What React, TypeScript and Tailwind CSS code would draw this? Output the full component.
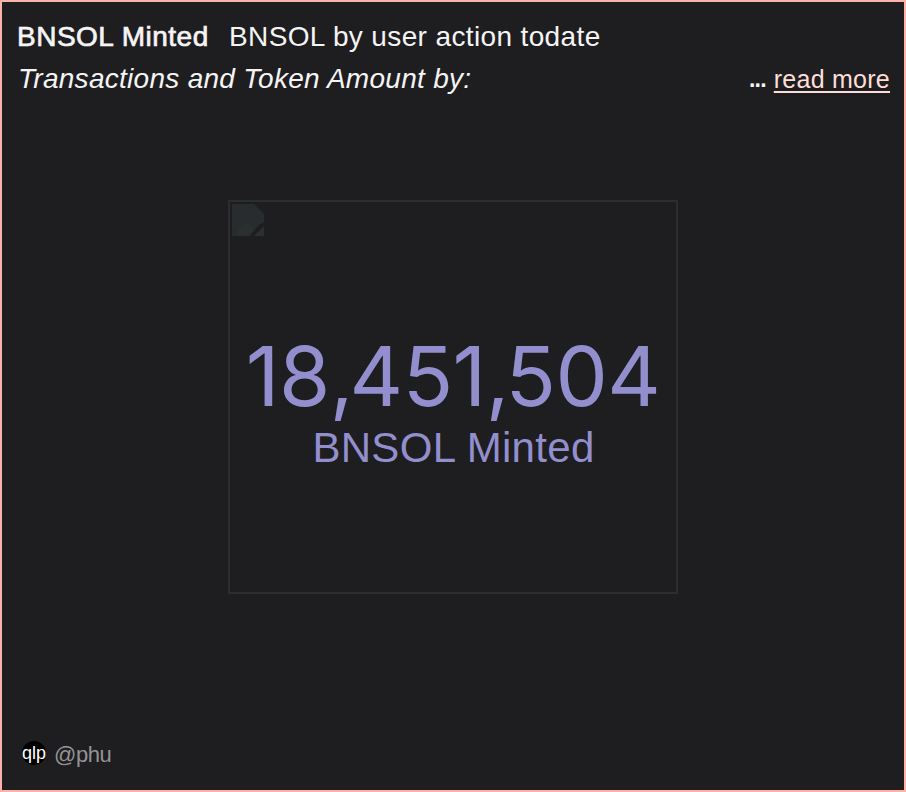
function BrokenImage() {
  return (
    <svg className="m-0.5 block h-8 w-8" viewBox="0 0 32 32" aria-hidden="true">
      <path d="M0 0H22L32 10V18L26 22L18 32H0Z" fill="#292c2e" />
      <path d="M6 26L14 18L22 24L16 32H6Z" fill="#29302d" />
      <path d="M32 22V32H22Z" fill="#2c2f31" />
    </svg>
  );
}

export default function App() {
  return (
    <main className="flex h-[792px] w-[906px] flex-col border-2 border-[#ffb3a8] bg-[#1e1e20] font-['Liberation_Sans',Arial,sans-serif] text-[#f5f4f5]">
      <header className="flex h-[98px] flex-col px-[14px] pt-[14px]">
        <div className="flex h-[42px] items-center whitespace-nowrap text-[28px] leading-[42px]">
          <h1 className="w-[213px] pl-px tracking-[0.5px] [-webkit-text-stroke:0.7px_currentColor]">BNSOL Minted</h1>
          <p className="tracking-[0.37px]">BNSOL by user action todate</p>
        </div>
        <div className="flex h-[42px] items-center justify-between whitespace-nowrap text-[28px] leading-[42px]">
          <p className="pl-0.5 italic tracking-[0.28px]">Transactions and Token Amount by:</p>
          <div className="flex items-center gap-2 text-[25px]">
            <span className="text-[23px] font-bold tracking-[-0.8px]">...</span>
            <a className="text-[#ffded9] underline decoration-2 underline-offset-3 tracking-[0.25px]">read more</a>
          </div>
        </div>
      </header>
      <section className="flex flex-1 justify-center pt-[100px]">
        <div className="flex h-[394px] w-[450px] flex-col border-2 border-[#2d2d2f]">
          <BrokenImage />
          <div className="flex flex-col items-center pt-[90px] text-[#938fce]">
            <strong className="whitespace-nowrap font-['Inter',sans-serif] text-[83px] font-normal leading-[96px] tracking-[-0.6px]">
              18<span className="tracking-[-4px]">,</span>451<span className="tracking-[-4px]">,</span>504
            </strong>
            <span className="whitespace-nowrap pl-px text-[42px] leading-[48px] tracking-[0.3px]">BNSOL Minted</span>
          </div>
        </div>
      </section>
      <footer className="flex h-[74px] items-center gap-2 px-5">
        <span className="flex h-6 w-6 items-center justify-center rounded-full bg-black text-[18px] text-white">qlp</span>
        <span className="pt-0.5 text-[22px] tracking-[-0.4px] text-[#949496]">@phu</span>
      </footer>
    </main>
  );
}
